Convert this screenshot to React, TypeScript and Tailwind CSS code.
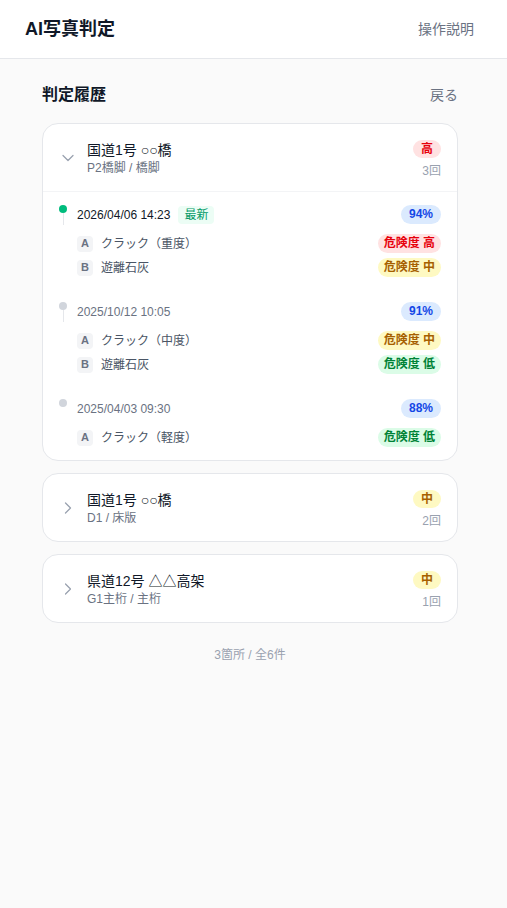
import { ChevronDown, ChevronRight } from "lucide-react";

type Level = "高" | "中" | "低";

type Finding = { code: string; name: string; level: Level };
type Entry = { date: string; latest?: boolean; score: number; findings: Finding[] };
type Site = { name: string; part: string; level: Level; count: number; open?: boolean; entries: Entry[] };

const sites: Site[] = [
  {
    name: "国道1号 ○○橋",
    part: "P2橋脚 / 橋脚",
    level: "高",
    count: 3,
    open: true,
    entries: [
      {
        date: "2026/04/06 14:23",
        latest: true,
        score: 94,
        findings: [
          { code: "A", name: "クラック（重度）", level: "高" },
          { code: "B", name: "遊離石灰", level: "中" },
        ],
      },
      {
        date: "2025/10/12 10:05",
        score: 91,
        findings: [
          { code: "A", name: "クラック（中度）", level: "中" },
          { code: "B", name: "遊離石灰", level: "低" },
        ],
      },
      {
        date: "2025/04/03 09:30",
        score: 88,
        findings: [{ code: "A", name: "クラック（軽度）", level: "低" }],
      },
    ],
  },
  { name: "国道1号 ○○橋", part: "D1 / 床版", level: "中", count: 2, entries: [] },
  { name: "県道12号 △△高架", part: "G1主桁 / 主桁", level: "中", count: 1, entries: [] },
];

const levelStyle: Record<Level, string> = {
  高: "bg-red-100 text-red-600",
  中: "bg-yellow-100 text-yellow-700",
  低: "bg-green-100 text-green-700",
};

function SiteCard({ site }: { site: Site }) {
  return (
    <div className="bg-white border border-gray-200 rounded-2xl overflow-hidden">
      <div className="flex items-start pl-[15px] pr-4 pt-4 pb-[13px]">
        <div className="h-9 flex items-center">
          {site.open ? (
            <ChevronDown size={20} strokeWidth={1.5} className="text-gray-400" />
          ) : (
            <ChevronRight size={20} strokeWidth={1.5} className="text-gray-400" />
          )}
        </div>
        <div className="ml-[9px] flex-1">
          <p className="text-sm leading-5 text-gray-900">{site.name}</p>
          <p className="text-xs leading-4 text-gray-500">{site.part}</p>
        </div>
        <div className="flex flex-col items-end">
          <span className={`h-[18px] px-2 rounded-full text-xs font-bold leading-[18px] ${levelStyle[site.level]}`}>
            {site.level}
          </span>
          <span className="mt-1.5 text-xs leading-[14px] text-gray-400">{site.count}回</span>
        </div>
      </div>

      {site.open && (
        <div className="border-t border-gray-100 px-4 pt-[13px] pb-[13px] flex flex-col gap-[25px]">
          {site.entries.map((entry, i) => (
            <div key={entry.date} className="flex">
              <div className="w-2 flex flex-col items-center">
                <span className={`w-2 h-2 rounded-full ${entry.latest ? "bg-emerald-500" : "bg-gray-300"}`} />
                {i < site.entries.length - 1 && <span className="w-px h-3 bg-gray-200" />}
              </div>
              <div className="ml-2.5 flex-1">
                <div className="flex items-center h-[19px]">
                  <span className={`text-xs ${entry.latest ? "text-gray-900" : "text-gray-500"}`}>{entry.date}</span>
                  {entry.latest && (
                    <span className="ml-2 px-1.5 rounded bg-emerald-50 text-emerald-600 text-xs leading-[18px]">最新</span>
                  )}
                  <span className="ml-auto h-[19px] px-2 rounded-full bg-blue-100 text-blue-700 text-xs font-bold leading-[19px]">
                    {entry.score}%
                  </span>
                </div>
                <div className="mt-2.5 flex flex-col gap-[5px]">
                  {entry.findings.map((f) => (
                    <div key={f.code} className="flex items-center h-[19px]">
                      <span className="w-4 h-4 rounded bg-gray-100 text-gray-500 text-[11px] font-bold flex items-center justify-center">
                        {f.code}
                      </span>
                      <span className="ml-2 text-xs text-gray-600">{f.name}</span>
                      <span className={`ml-auto h-[19px] px-1.5 rounded-full text-xs font-semibold leading-[19px] ${levelStyle[f.level]}`}>
                        危険度 {f.level}
                      </span>
                    </div>
                  ))}
                </div>
              </div>
            </div>
          ))}
        </div>
      )}
    </div>
  );
}

export default function App() {
  return (
    <div
      className="min-h-[908px] bg-neutral-50"
      style={{ fontFamily: '"Liberation Sans", "Noto Sans CJK JP", sans-serif' }}
    >
      <header className="h-[59px] bg-white border-b border-gray-200 flex items-center justify-between pl-[25px] pr-[25px]">
        <h1 className="text-lg font-bold text-gray-900">AI写真判定</h1>
        <button className="px-2 text-sm text-gray-500">操作説明</button>
      </header>

      <main className="ml-[42px] w-[416px] pt-6">
        <div className="flex items-center justify-between mb-4">
          <h2 className="text-base leading-6 font-bold text-gray-900">判定履歴</h2>
          <button className="text-sm text-gray-500">戻る</button>
        </div>

        <div className="flex flex-col gap-3">
          {sites.map((s, i) => (
            <SiteCard key={i} site={s} />
          ))}
        </div>

        <p className="mt-6 text-center text-xs leading-4 text-gray-400">3箇所 / 全6件</p>
      </main>
    </div>
  );
}
